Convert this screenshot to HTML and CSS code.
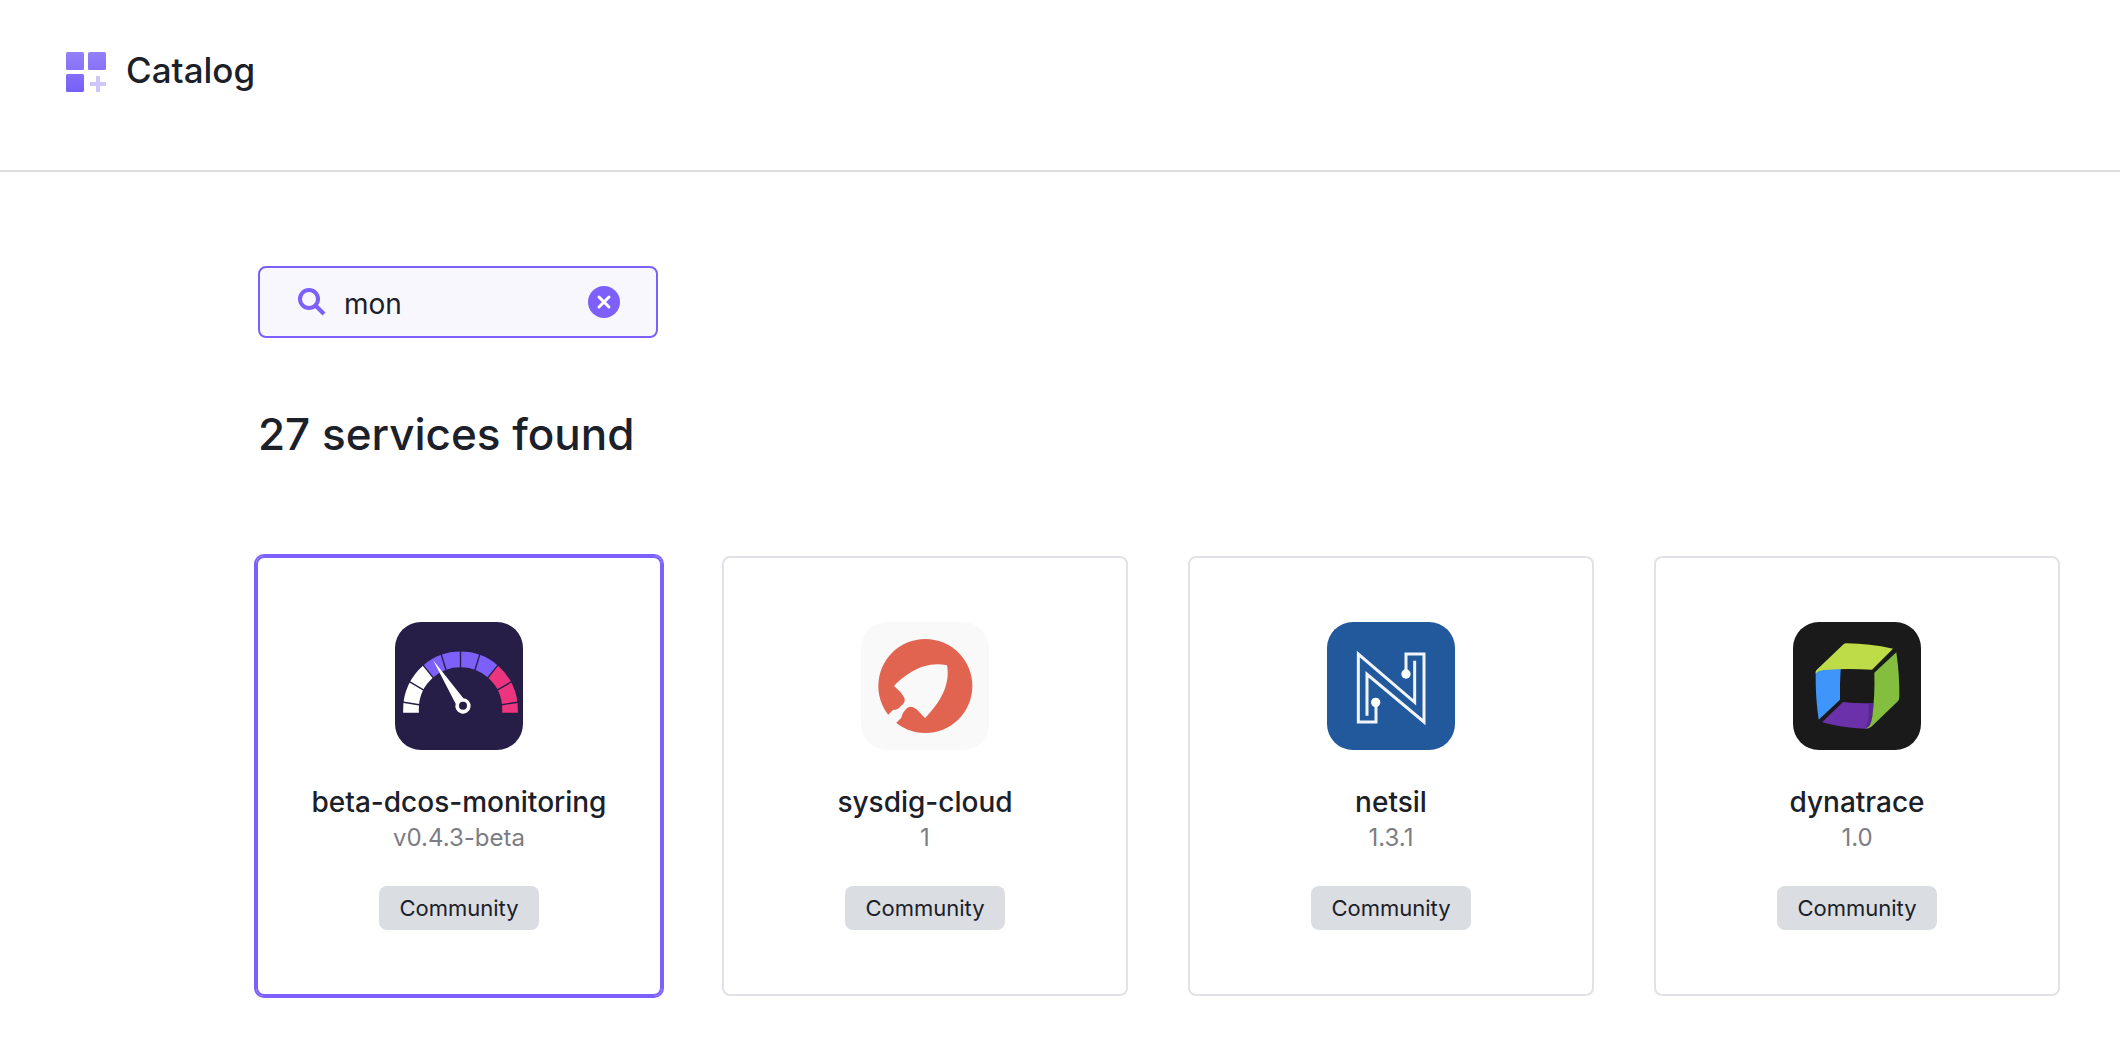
FILE: index.html
```html
<!DOCTYPE html>
<html lang="en">
<head>
<meta charset="utf-8">
<title>Catalog</title>
<meta name="viewport" content="width=device-width, initial-scale=1">
<link rel="stylesheet" href="styles.css">
</head>
<body>
<header class="page-header">
  <svg class="page-header-icon" viewBox="0 0 40 40" aria-hidden="true">
    <defs>
      <linearGradient id="tile" gradientUnits="userSpaceOnUse" x1="0" y1="0" x2="0" y2="40">
        <stop offset="0" stop-color="#9580f9"/>
        <stop offset="1" stop-color="#765ff8"/>
      </linearGradient>
    </defs>
    <g fill="url(#tile)">
      <rect width="18" height="18" rx="1.5"/>
      <rect x="22" width="18" height="18" rx="1.5"/>
      <rect y="22" width="18" height="18" rx="1.5"/>
    </g>
    <path d="M30 24h4v6h6v4h-6v6h-4v-6h-6v-4h6z" fill="#cfc6fc"/>
  </svg>
  <span class="page-title">Catalog</span>
</header>
<main class="catalog">
  <form class="search" role="search">
    <label class="search-label" for="query" aria-label="Search catalog">
      <svg class="search-icon" viewBox="0 0 28 28" aria-hidden="true">
        <circle cx="11" cy="11" r="9"/>
        <path d="M17 17l9 9"/>
      </svg>
    </label>
    <input class="search-input" id="query" type="text" value="mon">
    <button class="search-clear" type="reset" aria-label="Clear search">
      <svg class="search-clear-icon" viewBox="0 0 32 32" aria-hidden="true">
        <circle cx="16" cy="16" r="16"/>
        <path d="M11 11l10 10M21 11L11 21"/>
      </svg>
    </button>
  </form>
  <h1 class="results-title">27 services found</h1>
  <div class="cards">
    <a class="card card-selected" href="#beta-dcos-monitoring">
      <svg class="card-icon" viewBox="33 30 384 384" aria-hidden="true">
        <rect x="33" y="30" width="384" height="384" fill="#261e47"/>
        <g fill="none" stroke-width="47">
          <path d="M81 302V291A148.500 148.500 0 0 1 133 178" stroke="#fff"/>
          <path d="M133 178A148.500 148.500 0 0 1 326 178" stroke="#7d5ffa"/>
          <path d="M326 178A148.500 148.500 0 0 1 378 291V302" stroke="#ed347f"/>
        </g>
        <path d="M229.500 114V172M170 122L187 177M289 122L272 177M116 158L149 199M343 158L310 199M76 209L122 236M383 209L337 236M54 270L110 279M405 270L349 279" stroke="#261e47" stroke-width="4"/>
        <path d="M147 144L238 259A23 23 0 1 1 215 275Z" fill="#fff"/>
        <circle cx="237" cy="281" r="12" fill="#261e47"/>
      </svg>
      <span class="card-name">beta-dcos-monitoring</span>
      <span class="card-version">v0.4.3-beta</span>
      <span class="badge">Community</span>
    </a>
    <a class="card" href="#sysdig-cloud">
      <svg class="card-icon" viewBox="30 30 384 384" aria-hidden="true">
        <rect x="30" y="30" width="384" height="384" fill="#f9f9f9"/>
        <circle cx="223" cy="222" r="141" fill="#e16451"/>
        <path d="M129 222C160 188 222 144 288 160C299 220 266 274 222 318L199 294C188 284 174 279 164 293C151 306 153 314 151 317L136 332L115 350L95 327L113 307L126 294C137 294 145 289 150 281C160 276 164 266 159 256L149 241Z" fill="#f9f9f9"/>
      </svg>
      <span class="card-name">sysdig-cloud</span>
      <span class="card-version">1</span>
      <span class="badge">Community</span>
    </a>
    <a class="card" href="#netsil">
      <svg class="card-icon" viewBox="30 30 384 384" aria-hidden="true">
        <rect x="30" y="30" width="384" height="384" fill="#22599c"/>
        <g fill="none" stroke="#f1f5fa" stroke-width="9">
          <path d="M177 272V330H124V126L293 271V146"/>
          <path d="M267 186V126H321V330L150 187V311"/>
        </g>
        <circle cx="176" cy="271" r="14" fill="#fff"/>
        <circle cx="267" cy="186" r="14" fill="#fff"/>
      </svg>
      <span class="card-name">netsil</span>
      <span class="card-version">1.3.1</span>
      <span class="badge">Community</span>
    </a>
    <a class="card" href="#dynatrace">
      <svg class="card-icon" viewBox="30 30 384 384" aria-hidden="true">
        <rect x="30" y="30" width="384" height="384" fill="#1a1a1a"/>
        <path d="M98 186C98 178 104 172 114 171H173Q170 215 171 263L107 323Q97 255 98 186Z" fill="#4095fa"/>
        <path d="M98 186C97 178 98 177 103 172L180 98Q184 94 191 94Q260 95 330 110L267 173Q190 168 125 174C108 176 101 179 98 186Z" fill="#bedc48"/>
        <path d="M180 270Q224 275 271 273Q269 310 263 334C260 344 256 349 246 350Q180 348 117 331Z" fill="#6b31ab"/>
        <path d="M256 273H271Q269 310 263 334C260 344 256 349 246 350C258 332 259 300 256 273Z" fill="#59258f"/>
        <path d="M274 182L340 121Q350 190 349 255Q349 264 343 269L265 344Q258 350 246 350C260 346 264 337 268 313Q276 250 274 182Z" fill="#84be3f"/>
      </svg>
      <span class="card-name">dynatrace</span>
      <span class="card-version">1.0</span>
      <span class="badge">Community</span>
    </a>
  </div>
</main>
</body>
</html>
```
FILE: styles.css
```css
* {
  box-sizing: border-box;
}

body {
  margin: 0;
  background: #fff;
  color: #1b2029;
  font-family: Inter, "Liberation Sans", sans-serif;
}

.page-header {
  display: flex;
  align-items: flex-start;
  gap: 20px;
  padding: 52px 66px 78px;
  border-bottom: 2px solid #dcdcdc;
}

.page-header-icon {
  width: 40px;
  height: 40px;
}

.page-title {
  font-size: 35px;
  font-weight: 500;
  line-height: 36px;
}

.catalog {
  padding: 94px 60px 40px 256px;
}

.search {
  display: flex;
  align-items: center;
  gap: 18px;
  width: 400px;
  height: 72px;
  margin-left: 2px;
  padding: 0 36px 0 38px;
  border: 2px solid #7d5ffa;
  border-radius: 8px;
  background: #f8f7fd;
}

.search-label {
  display: flex;
}

.search-icon {
  width: 28px;
  height: 28px;
  fill: none;
  stroke: #7d5ffa;
  stroke-width: 4;
}

.search-input {
  flex: 1;
  min-width: 0;
  padding: 4px 0 0;
  border: 0;
  outline: 0;
  background: transparent;
  color: inherit;
  font-family: inherit;
  font-size: 28px;
}

.search-clear {
  display: flex;
  padding: 0;
  border: 0;
  background: transparent;
}

.search-clear-icon {
  width: 32px;
  height: 32px;
  fill: #7d5ffa;
  stroke-linecap: round;
}

.search-clear-icon path {
  stroke: #fff;
  stroke-width: 3;
}

.results-title {
  margin: 64px 0 90px 2px;
  font-size: 44px;
  font-weight: 500;
  line-height: 64px;
}

.cards {
  display: grid;
  grid-template-columns: repeat(4, 1fr);
  gap: 60px;
}

.card {
  display: flex;
  flex-direction: column;
  align-items: center;
  padding: 64px 20px;
  border: 2px solid #e1e1e7;
  border-radius: 8px;
  color: inherit;
  text-decoration: none;
}

.card-selected {
  border-color: #7d5ffa;
  box-shadow: 0 0 0 2px #7d5ffa;
}

.card-icon {
  width: 128px;
  height: 128px;
  margin-bottom: 34px;
  border-radius: 26px;
}

.card-name {
  font-size: 28px;
  font-weight: 500;
  line-height: 36px;
}

.card-version {
  margin-bottom: 30px;
  color: #7c7d83;
  font-size: 24px;
  line-height: 36px;
}

.badge {
  padding: 0 20px;
  border-radius: 8px;
  background: #dadde2;
  font-size: 22px;
  line-height: 44px;
}
```
